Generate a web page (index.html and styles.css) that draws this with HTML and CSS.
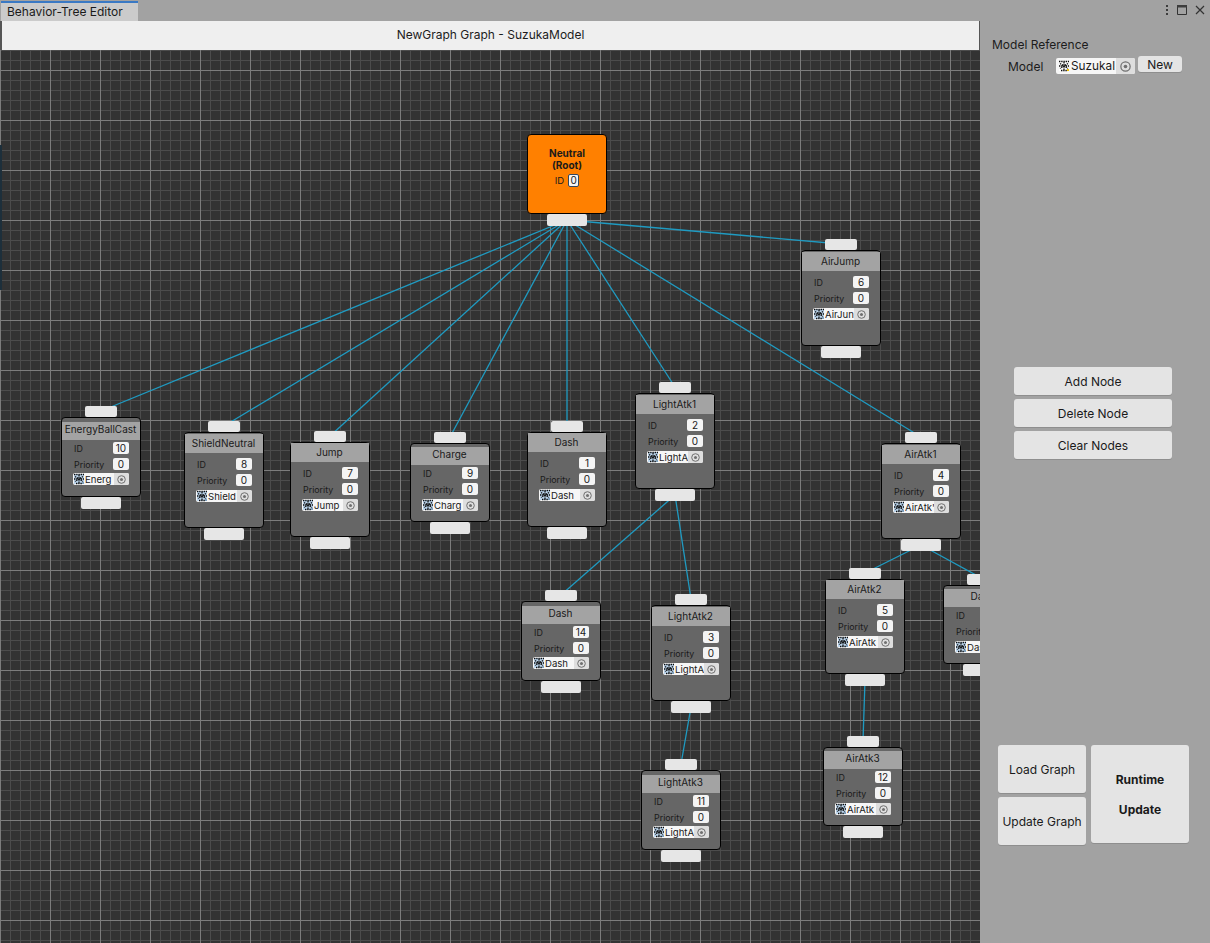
FILE: index.html
```html
<!DOCTYPE html>
<html lang="en">
<head>
  <meta charset="UTF-8" />
  <meta name="viewport" content="width=device-width, initial-scale=1.0" />
  <title>Behavior-Tree Editor</title>
  <link rel="stylesheet" href="styles.css">
</head>
<body>
  <div class="tabstrip">
    <div class="tab">Behavior-Tree Editor</div>
    <div class="window-icons">
      <svg width="4" height="10" viewBox="0 0 4 10"><rect x="1" y="0" width="2" height="2"/><rect x="1" y="4" width="2" height="2"/><rect x="1" y="8" width="2" height="2"/></svg>
      <svg width="10" height="10" viewBox="0 0 10 10"><path d="M.5 .5h9v9h-9z" fill="none" stroke="#333"/><rect x="0" y="0" width="10" height="2.5"/></svg>
      <svg width="10" height="10" viewBox="0 0 10 10"><path d="M1 1l8 8M9 1l-8 8" fill="none" stroke="#333" stroke-width="1.2"/></svg>
    </div>
  </div>
  <div class="editor">
    <main class="graph-area">
      <div class="graph-title">NewGraph Graph - SuzukaModel</div>
      <div class="canvas" id="canvas">
        <svg class="links" id="links" width="980" height="893"></svg>
      </div>
    </main>
    <aside class="sidebar">
      <div class="section-label">Model Reference</div>
      <div class="model-row">
        <span class="model-label">Model</span>
        <span class="object-field model-field" id="modelField"><span class="object-name">Suzukal</span></span>
        <button class="btn btn-new">New</button>
      </div>
      <div class="node-buttons">
        <button class="btn btn-node">Add Node</button>
        <button class="btn btn-node">Delete Node</button>
        <button class="btn btn-node">Clear Nodes</button>
      </div>
      <div class="graph-buttons">
        <div class="graph-stack">
          <button class="btn btn-graph">Load Graph</button>
          <button class="btn btn-graph">Update Graph</button>
        </div>
        <button class="btn btn-runtime"><span>Runtime</span><span>Update</span></button>
      </div>
    </aside>
  </div>
  <script src="graph.js"></script>
</body>
</html>
```

FILE: styles.css
```css
* {
  box-sizing: border-box;
}
html, body {
  height: 100%;
}
body {
  margin: 0;
  overflow: hidden;
  background-color: #a2a2a2;
  color: #111;
  font-family: Inter, "Liberation Sans", sans-serif;
  font-size: 12px;
}
button {
  font-family: inherit;
}

/* Window tab strip */
.tabstrip {
  height: 21px;
  display: flex;
  justify-content: space-between;
}
.tab {
  width: 137px;
  height: 20px;
  margin: 1px 0 0 1px;
  padding-left: 6px;
  border-top: 2px solid #3a79c4;
  background-color: #cbcbcb;
  font-size: 12px;
  line-height: 18px;
  color: #1a1a1a;
}
.window-icons {
  display: flex;
  align-items: center;
  gap: 8px;
  padding: 0 5px 1px 0;
}
.window-icons svg {
  fill: #3c3c3c;
}

.editor {
  height: 922px;
  display: flex;
}

/* Graph */
.graph-area {
  width: 980px;
  flex: none;
  display: flex;
  flex-direction: column;
  background-color: #555;
}
.graph-title {
  height: 29px;
  margin-left: 2px;
  margin-right: 1px;
  background-color: #efefef;
  text-align: center;
  font-size: 12px;
  line-height: 28px;
  color: #1c1c1c;
}
.canvas {
  position: relative;
  flex: 1;
  overflow: hidden;
  background-color: #333333;
  background-image:
    linear-gradient(to right, #7c7c7c 1px, transparent 1px),
    linear-gradient(to bottom, #7c7c7c 1px, transparent 1px),
    linear-gradient(to right, #4c4c4c 1px, transparent 1px),
    linear-gradient(to bottom, #4c4c4c 1px, transparent 1px);
  background-size: 50px 50px, 50px 50px, 10px 10px, 10px 10px;
  background-position: 0 20px, 0 20px, 0 0, 0 0;
}
/* dark strip along the left edge of the canvas */
.canvas::before {
  content: "";
  position: absolute;
  left: 0;
  top: 95px;
  width: 2px;
  height: 145px;
  background-color: #1d2f3b;
}
.links {
  position: absolute;
  left: 0;
  top: 0;
}
.links line {
  stroke: #1f9bc2;
  stroke-width: 1.3;
}

/* Nodes */
.node {
  position: absolute;
  width: 80px;
  border: 1px solid #000;
  border-radius: 4px;
  background-color: #666666;
  color: #1a1a1a;
  font-size: 8.9px;
  padding-top: 4px;
}
.node-title {
  height: 18px;
  padding-right: 1px;
  background-color: #a3a3a3;
  text-align: center;
  font-size: 10px;
  line-height: 14px;
  white-space: nowrap;
}
.node.snug {
  padding-top: 3px;
}
.node.snug .node-field {
  margin-top: 2px;
}
.node.tall {
  padding-top: 1px;
}
.node.tall .node-title {
  height: 19px;
  line-height: 19px;
}
.node.tall .node-row.first {
  margin-top: 3px;
}
.node.tall .node-field {
  margin-top: 2px;
}
.node.tall.snug {
  padding-top: 0;
}
.node-row {
  display: flex;
  align-items: center;
  justify-content: space-between;
  height: 16px;
  padding: 0 11px 0 12px;
}
.value-box {
  width: 16px;
  height: 12px;
  border-radius: 2px;
  background-color: #f4f4f4;
  text-align: center;
  line-height: 12px;
  font-size: 10px;
}
.object-field {
  display: flex;
  align-items: center;
  border-radius: 2px;
  background-color: #f6f6f6;
  overflow: hidden;
  color: #1a1a1a;
}
.object-field svg {
  flex: none;
  display: block;
}
.object-name {
  flex: 1;
  min-width: 0;
  overflow: hidden;
  white-space: nowrap;
}
.object-pick {
  flex: none;
  width: 15px;
  height: 100%;
  display: flex;
  align-items: center;
  justify-content: center;
  background-color: #dedede;
}
.node-field {
  width: 56px;
  height: 12px;
  margin: 1px 0 0 11px;
  font-size: 9.6px;
}
.port {
  position: absolute;
  left: 50%;
  border-radius: 2px;
  background-color: #e6e6e6;
}
.port-in {
  width: 32px;
  height: 11px;
  top: -12px;
  margin-left: -16px;
}
.port-out {
  width: 40px;
  height: 12px;
  bottom: -13px;
  margin-left: -20px;
}

/* Root node */
.node.root {
  background-color: #ff8000;
  text-align: center;
  padding-top: 12px;
  font-size: 10px;
  font-weight: 700;
  line-height: 12px;
}
.root-id {
  display: flex;
  justify-content: center;
  align-items: center;
  gap: 4px;
  margin-top: 3px;
  font-size: 9.5px;
  font-weight: 400;
}
.root-id .value-box {
  width: 11px;
  height: 13px;
  border: 1px solid #33475c;
  line-height: 11px;
}

/* Sidebar */
.sidebar {
  flex: 1;
  padding: 16px 0 0 12px;
}
.section-label {
  line-height: 15px;
  color: #1c1c1c;
}
.model-row {
  display: flex;
  align-items: flex-start;
  margin-top: 4px;
  padding-left: 16px;
}
.model-label {
  width: 48px;
  line-height: 17px;
  margin-top: 2px;
  color: #1c1c1c;
}
.model-field {
  width: 79px;
  height: 16px;
  margin-top: 2px;
  padding-left: 2px;
  font-size: 11.8px;
}
.model-field .object-name {
  padding-left: 1px;
}
.model-field .object-pick {
  width: 19px;
}
.model-field .object-pick svg {
  width: 11px;
  height: 11px;
}
.btn {
  border: 0;
  border-radius: 3px;
  background-color: #e4e4e4;
  color: #1a1a1a;
  padding: 0;
  font-size: 12px;
  box-shadow: 0 1px 0 #8e8e8e;
}
.btn-new {
  width: 44px;
  height: 16px;
  margin-left: 3px;
  line-height: 15px;
}
.node-buttons {
  display: flex;
  flex-direction: column;
  gap: 4px;
  margin: 292px 0 0 22px;
}
.btn-node {
  width: 158px;
  height: 28px;
}
.graph-buttons {
  display: flex;
  gap: 5px;
  margin: 286px 0 0 6px;
}
.graph-stack {
  display: flex;
  flex-direction: column;
  gap: 4px;
}
.btn-graph {
  width: 88px;
  height: 48px;
}
.btn-runtime {
  width: 98px;
  height: 98px;
  display: flex;
  flex-direction: column;
  align-items: center;
  justify-content: center;
  gap: 15px;
  font-weight: 700;
}
```

FILE: graph.js
```js
// Node data: x,y is the top-left of the node body on the canvas
const nodes = [
  { id: 0, name: "Neutral", root: true, x: 527, y: 84, h: 80 },
  { id: 10, name: "EnergyBallCast", obj: "Energ", x: 61, y: 367, h: 80, parent: 0 },
  { id: 8, name: "ShieldNeutral", obj: "Shield", x: 184, y: 382, h: 96, parent: 0 },
  { id: 7, name: "Jump", obj: "Jump", x: 290, y: 392, h: 95, parent: 0 },
  { id: 9, name: "Charge", obj: "Charg", x: 410, y: 393, h: 79, parent: 0 },
  { id: 1, name: "Dash", obj: "Dash", x: 527, y: 382, h: 95, parent: 0 },
  { id: 2, name: "LightAtk1", obj: "LightA", x: 635, y: 343, h: 96, parent: 0 },
  { id: 6, name: "AirJump", obj: "AirJun", x: 801, y: 200, h: 96, parent: 0 },
  { id: 4, name: "AirAtk1", obj: "AirAtk'", x: 881, y: 393, h: 96, parent: 0 },
  { id: 14, name: "Dash", obj: "Dash", x: 521, y: 551, h: 80, parent: 2 },
  { id: 3, name: "LightAtk2", obj: "LightA", x: 651, y: 555, h: 96, parent: 2 },
  { id: 11, name: "LightAtk3", obj: "LightA", x: 641, y: 720, h: 80, parent: 3 },
  { id: 5, name: "AirAtk2", obj: "AirAtk", x: 825, y: 529, h: 95, parent: 4 },
  { id: 13, name: "Dash", obj: "Dash", x: 943, y: 535, h: 79, parent: 4 },
  { id: 12, name: "AirAtk3", obj: "AirAtk", x: 823, y: 697, h: 79, parent: 5 }
];

// Small dithered mesh icon used by every object field
function meshIcon(fill, dot) {
  return `<svg width="12" height="12" viewBox="0 0 12 12">
    <rect x="1" y="1" width="10" height="10" fill="${fill}"/>
    <path d="M1 1.5h10M2 3.5l8 5M10 3.5l-8 5M6 2v9M1 6h10M3 10.5h6" stroke="#0c0c0c" stroke-width="1.3" stroke-dasharray="1.4 .8" fill="none"/>
    <rect x="9" y="9" width="2" height="2" fill="${dot}"/>
  </svg>`;
}
const pickIcon = `<svg width="9" height="9" viewBox="0 0 9 9">
  <circle cx="4.5" cy="4.5" r="3.8" fill="none" stroke="#707070"/><circle cx="4.5" cy="4.5" r="1.5" fill="#707070"/>
</svg>`;

function nodeClass(node) {
  if (node.root) return "node root";
  let name = "node";
  if (node.h >= 95) name += " tall";
  if (node.h === 95 || node.h === 79) name += " snug";
  return name;
}

const canvas = document.getElementById("canvas");
const links = document.getElementById("links");

nodes.forEach(node => {
  const el = document.createElement("div");
  el.className = nodeClass(node);
  el.style.left = node.x + "px";
  el.style.top = node.y + "px";
  el.style.height = node.h + "px";

  if (node.root) {
    el.innerHTML = `<div>${node.name}<br>(Root)</div>
      <div class="root-id">ID <span class="value-box">${node.id}</span></div>
      <div class="port port-out"></div>`;
  } else {
    el.innerHTML = `<div class="port port-in"></div>
      <div class="node-title">${node.name}</div>
      <div class="node-row first"><span>ID</span><span class="value-box">${node.id}</span></div>
      <div class="node-row"><span>Priority</span><span class="value-box">0</span></div>
      <div class="object-field node-field">${meshIcon("#bcd6ee", "#7fa0bd")}<span class="object-name">${node.obj}</span><span class="object-pick">${pickIcon}</span></div>
      <div class="port port-out"></div>`;
  }
  canvas.appendChild(el);

  // Wire from the parent's out port to this node's in port
  if (node.parent !== undefined) {
    const parent = nodes.find(n => n.id === node.parent);
    const line = document.createElementNS("http://www.w3.org/2000/svg", "line");
    line.setAttribute("x1", parent.x + 40);
    line.setAttribute("y1", parent.y + parent.h + 6);
    line.setAttribute("x2", node.x + 40);
    line.setAttribute("y2", node.y - 6);
    links.appendChild(line);
  }
});

const modelField = document.getElementById("modelField");
modelField.insertAdjacentHTML("afterbegin", meshIcon("#ffffff", "#f2c200"));
modelField.insertAdjacentHTML("beforeend", `<span class="object-pick">${pickIcon}</span>`);
```
